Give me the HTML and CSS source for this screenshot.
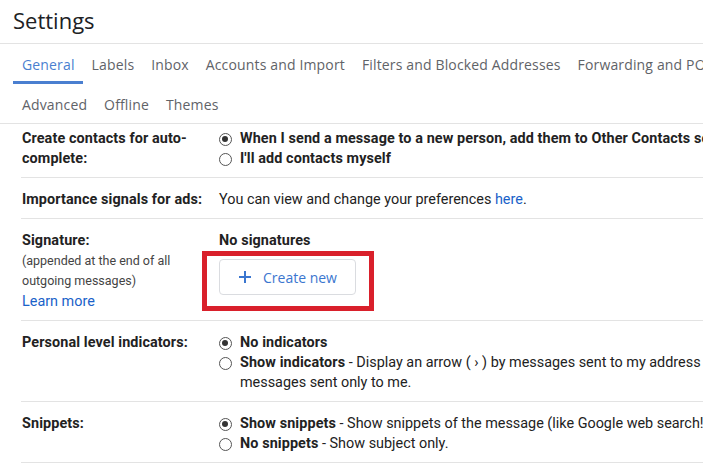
FILE: index.html
```html
<!DOCTYPE html>
<html lang="en">
<head>
<meta charset="utf-8">
<title>Settings</title>
<link rel="stylesheet" href="styles.css">
</head>
<body>
<div class="page">
  <header class="title-bar">
    <h1 class="title">Settings</h1>
  </header>
  <nav class="tabs">
    <div class="tab-row">
      <a class="tab active">General</a>
      <a class="tab">Labels</a>
      <a class="tab">Inbox</a>
      <a class="tab">Accounts and Import</a>
      <a class="tab">Filters and Blocked Addresses</a>
      <a class="tab">Forwarding and POP/IMAP</a>
      <a class="tab">Add-ons</a>
      <a class="tab">Chat and Meet</a>
    </div>
    <div class="tab-row second">
      <a class="tab">Advanced</a>
      <a class="tab">Offline</a>
      <a class="tab">Themes</a>
    </div>
  </nav>
  <main class="settings">
    <section class="row first">
      <div class="label">Create contacts for auto-complete:</div>
      <div class="value">
        <label class="option"><span class="radio checked"></span><b>When I send a message to a new person, add them to Other Contacts so that I can auto-complete to them next time</b></label>
        <label class="option"><span class="radio"></span><b>I'll add contacts myself</b></label>
      </div>
    </section>
    <section class="row">
      <div class="label">Importance signals for ads:</div>
      <div class="value">You can view and change your preferences <a class="link">here</a>.</div>
    </section>
    <section class="row">
      <div class="label">Signature:
        <div class="sub">(appended at the end of all outgoing messages)</div>
        <a class="link learn">Learn more</a>
      </div>
      <div class="value">
        <div class="strong">No signatures</div>
        <div class="btn-wrap">
          <button class="create-btn" type="button">
            <svg class="plus" width="14" height="14" viewBox="0 0 14 14" aria-hidden="true"><path d="M7 1v12M1 7h12" stroke="currentColor" stroke-width="2" fill="none"/></svg>
            <span>Create new</span>
          </button>
          <span class="highlight"></span>
        </div>
      </div>
    </section>
    <section class="row">
      <div class="label">Personal level indicators:</div>
      <div class="value">
        <label class="option"><span class="radio checked"></span><b>No indicators</b></label>
        <label class="option"><span class="radio"></span><span class="desc"><b>Show indicators</b> - Display an arrow ( › ) by messages sent to my address (not a mailing list), and a double arrow ( » ) by messages sent only to me.</span></label>
      </div>
    </section>
    <section class="row">
      <div class="label">Snippets:</div>
      <div class="value">
        <label class="option"><span class="radio checked"></span><span class="desc"><b>Show snippets</b> - Show snippets of the message (like Google web search!).</span></label>
        <label class="option"><span class="radio"></span><span class="desc"><b>No snippets</b> - Show subject only.</span></label>
      </div>
    </section>
  </main>
</div>
</body>
</html>
```

FILE: styles.css
```css
html, body {
  margin: 0;
  padding: 0;
  background: #fff;
  overflow: hidden;
}

body {
  font-family: Roboto, "Liberation Sans", Arial, sans-serif;
  color: #222;
  font-size: 14.4px;
}

.page {
  width: 1000px;
}

.title-bar {
  height: 44px;
  border-bottom: 1px solid #e3e3e3;
  display: flex;
  align-items: center;
  padding-left: 13px;
  box-sizing: border-box;
}

.title {
  margin: 0;
  font-family: "Open Sans", Roboto, sans-serif;
  font-weight: 400;
  font-size: 22px;
  color: #202124;
  line-height: 1;
  position: relative;
  top: -2px;
}

.tabs {
  padding-left: 13px;
  border-bottom: 1px solid #e3e3e3;
}

.tab-row {
  display: flex;
  white-space: nowrap;
  height: 40px;
}

.tab-row.second {
  height: 39px;
}

.tab {
  display: flex;
  align-items: center;
  padding: 3px 8px 0 9px;
  font-family: "Open Sans", Roboto, sans-serif;
  font-size: 14px;
  font-weight: 500;
  letter-spacing: 0.15px;
  color: #5f6368;
  border-bottom: 3px solid transparent;
  box-sizing: border-box;
}

.tab-row.second .tab {
  padding-top: 1px;
  border-bottom: 0;
}

.tab.active {
  color: #4a7fd0;
  border-bottom-color: #4a7fd0;
}

.settings {
  margin-left: 21px;
}

.row {
  display: grid;
  grid-template-columns: 190px 1fr;
  column-gap: 7px;
  padding: 12px 0 8px 1px;
  border-bottom: 1px solid #e3e3e3;
  line-height: 20px;
}

.row.first {
  padding-top: 5px;
}

.label {
  font-weight: 700;
  color: #222;
  letter-spacing: 0.1px;
}

.row.first .label {
  padding-right: 8px;
}

.sub {
  font-weight: 400;
  font-size: 12.5px;
  color: #444;
  letter-spacing: 0;
}

.link {
  color: #1a62c9;
  font-weight: 400;
  text-decoration: none;
  letter-spacing: 0;
}

.learn {
  display: block;
  margin-top: 1px;
}

.strong,
.option b {
  font-weight: 700;
  letter-spacing: 0.1px;
}

.option {
  display: flex;
  align-items: flex-start;
}

.desc {
  display: block;
}

.radio {
  flex: none;
  width: 13px;
  height: 13px;
  box-sizing: border-box;
  border: 1.5px solid #555;
  border-radius: 50%;
  margin: 4px 8px 0 0;
  position: relative;
  background: #fff;
}

.radio.checked::after {
  content: "";
  position: absolute;
  left: 2px;
  top: 2px;
  width: 6px;
  height: 6px;
  border-radius: 50%;
  background: #333;
}

.btn-wrap {
  position: relative;
  display: inline-block;
  margin-top: 8px;
}

.create-btn {
  display: flex;
  align-items: center;
  gap: 11px;
  width: 137px;
  height: 36px;
  box-sizing: border-box;
  padding: 0 0 0 18px;
  background: #fff;
  border: 1px solid #dadce0;
  border-radius: 4px;
  color: #3b76cf;
  font-family: "Open Sans", Roboto, sans-serif;
  font-size: 14px;
  font-weight: 500;
  cursor: pointer;
}

.plus {
  flex: none;
}

.highlight {
  position: absolute;
  top: -8px;
  left: -17px;
  right: -18px;
  bottom: -16px;
  border: 5px solid #d9202b;
  pointer-events: none;
}
```
